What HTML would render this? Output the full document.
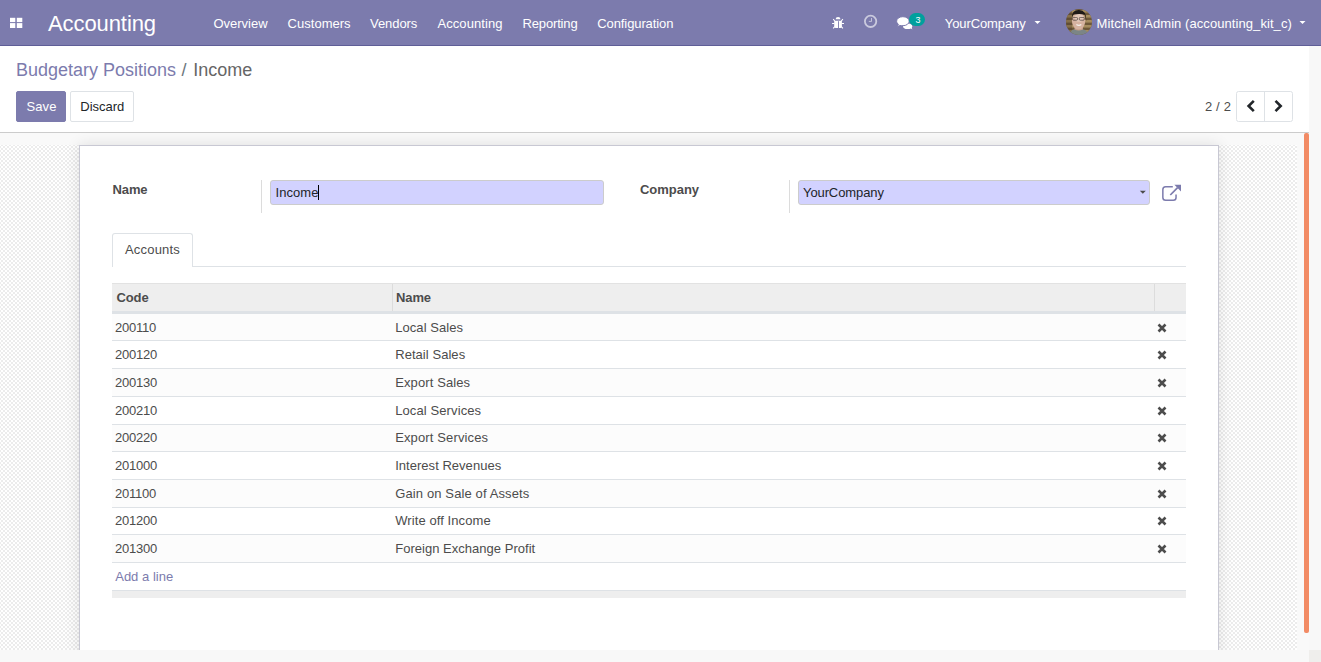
<!DOCTYPE html><html><head><meta charset="utf-8"><style>
*{box-sizing:border-box;margin:0;padding:0}
html,body{width:1321px;height:662px;overflow:hidden;background:#fff}
body{font-family:"Liberation Sans",sans-serif;font-size:13px;color:#4c4c4c;position:relative}
.a{position:absolute;white-space:nowrap;line-height:1}
#nav{position:absolute;left:0;top:0;width:1321px;height:46px;background:#7c7bad;border-bottom:1px solid #5f5e97}
#cp{position:absolute;left:0;top:46px;width:1309px;height:87px;background:#fff;border-bottom:1px solid #ccc}
.btn{position:absolute;height:31px;border-radius:2px}
#content{position:absolute;left:0;top:133px;width:1309px;height:517px;background:#f9f9f9;overflow:hidden}
#tex{position:absolute;left:0;top:12px;width:1297px;height:505px;background:conic-gradient(#ececec 25%,#fff 0 50%,#ececec 0 75%,#fff 0) 1px 1px/4px 4px}
#sheet{position:absolute;left:79px;top:145px;width:1140px;height:520px;background:#fff;border:1px solid #c8c8d3;box-shadow:0 0 14px rgba(0,0,0,.11)}
.inp{position:absolute;height:25px;background:#d2d2ff;border:1px solid #cccccc;border-radius:3px}
.sep{position:absolute;width:1px;background:#dcdcdc}
.hl{position:absolute;left:112px;width:1074px;height:1px;background:#dee2e6}
</style></head><body>
<div id="nav">
<svg class="a" style="left:0;top:0" width="30" height="46"><g fill="#fff"><rect x="10" y="17.8" width="5.3" height="4.3"/><rect x="16.8" y="17.8" width="5.5" height="4.3"/><rect x="10" y="23.1" width="5.3" height="4.9"/><rect x="16.8" y="23.1" width="5.5" height="4.9"/></g></svg>
<span class="a" style="left:48px;top:12.7px;letter-spacing:-0.085px;font-size:22px;color:#fff">Accounting</span>
<span class="a" style="left:213.5px;top:17px;letter-spacing:-0.022px;color:#fff">Overview</span>
<span class="a" style="left:287.6px;top:17px;letter-spacing:0.017px;color:#fff">Customers</span>
<span class="a" style="left:370px;top:17px;letter-spacing:-0.060px;color:#fff">Vendors</span>
<span class="a" style="left:437.5px;top:17px;letter-spacing:0.068px;color:#fff">Accounting</span>
<span class="a" style="left:522.5px;top:17px;letter-spacing:-0.152px;color:#fff">Reporting</span>
<span class="a" style="left:597.3px;top:17px;letter-spacing:-0.102px;color:#fff">Configuration</span>
<svg class="a" style="left:828px;top:12px" width="22" height="20" viewBox="0 0 22 20"><g fill="#fff"><path d="M7.6 7.3 Q7.7 5 10.05 5 Q12.4 5 12.5 7.3 Z"/><path d="M6.2 8.8 H13.9 V14.6 Q13.9 16 12.5 16 H7.6 Q6.2 16 6.2 14.6 Z"/></g><rect x="10" y="9.2" width="0.9" height="6.8" fill="#7c7bad"/><path d="M5.2 7.2 L6.8 9 M14.9 7.2 L13.3 9 M4.1 11.5 H6.4 M13.7 11.5 H16 M5.2 16.3 L6.8 14.6 M14.9 16.3 L13.3 14.6" stroke="#fff" stroke-width="1.1"/></svg>
<svg class="a" style="left:860px;top:10px" width="22" height="22" viewBox="0 0 22 22"><g fill="none" stroke="#fff" stroke-opacity=".6"><circle cx="10.6" cy="11.3" r="5.7" stroke-width="1.8"/><path d="M11.5 8 V11.4 H8.8" stroke-width="0.9"/></g></svg>
<svg class="a" style="left:893px;top:10px" width="35" height="22" viewBox="893 10 35 22"><g fill="#fff"><ellipse cx="907.6" cy="26.3" rx="4.6" ry="2.8"/><path d="M909.5 27.5 L912.4 29.4 L911.2 26.3 Z"/></g><g fill="#fff" stroke="#7c7bad" stroke-width="1"><path d="M896.6 21.2 A6.3 4.5 0 1 1 903 25.7 Q901 25.8 899.8 25.4 L897.4 27.3 L898.4 24.3 Q896.6 23.1 896.6 21.2 Z"/></g></svg>
<div class="a" style="left:909px;top:13px;width:16px;height:13.3px;border-radius:7px;background:#00a09d"></div>
<span class="a" style="left:915.5px;top:15.5px;letter-spacing:-0.005px;font-size:9px;color:#fff">3</span>
<span class="a" style="left:944.8px;top:17px;letter-spacing:-0.100px;color:#fff">YourCompany</span>
<svg class="a" style="left:1034px;top:20px" width="8" height="5"><path d="M0.5 1 H6.5 L3.5 4 Z" fill="#fff"/></svg>
<svg class="a" style="left:1066px;top:9px" width="26" height="26" viewBox="0 0 26 26"><defs><clipPath id="cc"><circle cx="13" cy="13" r="13"/></clipPath></defs><g clip-path="url(#cc)"><rect width="26" height="26" fill="#6e5838"/><g fill="#a58c5e"><rect x="0" y="1" width="26" height="2.6"/><rect x="0" y="6" width="26" height="2.6"/><rect x="0" y="11" width="26" height="2.6"/><rect x="0" y="16" width="26" height="2.6"/><rect x="0" y="21" width="26" height="2.6"/></g><rect x="0" y="0" width="6" height="26" fill="#4a3a28" opacity=".35"/><path d="M3 26 Q5 19.5 12.5 19.6 Q20 19.5 23.5 26 Z" fill="#7b8586"/><path d="M8.5 16 Q12.5 22 17 16 V20.5 Q12.5 22.5 8.5 20.5 Z" fill="#c49e88"/><ellipse cx="12.6" cy="11.8" rx="6.7" ry="8.6" fill="#d6b3a0"/><ellipse cx="13" cy="8.8" rx="4.5" ry="4" fill="#e2c8b9"/><path d="M6 9 Q5.5 0.8 13 1 Q20.8 0.9 20.3 12.5 Q19.6 8 18.6 5.6 Q13 4.2 7.5 5.6 Q6.5 7 6 9 Z" fill="#1f1a17"/><g fill="none" stroke="#3a302b" stroke-width="0.75" opacity=".85"><rect x="6.5" y="8.4" width="5" height="2.8" rx="1"/><rect x="13.3" y="8.4" width="5" height="2.8" rx="1"/></g><path d="M10.4 15.5 Q12.9 17.2 15.3 15.5" stroke="#f6f0ea" stroke-width="1.3" fill="none"/></g></svg>
<span class="a" style="left:1096.6px;top:17px;letter-spacing:0.072px;color:#fff">Mitchell Admin (accounting_kit_c)</span>
<svg class="a" style="left:1299px;top:20px" width="8" height="5"><path d="M0.5 1 H6.5 L3.5 4 Z" fill="#fff"/></svg>
</div>
<div id="cp"></div>
<span class="a" style="left:16.1px;top:61px;letter-spacing:-0.005px;font-size:18px;color:#7c7bad">Budgetary Positions</span>
<span class="a" style="left:181.5px;top:61px;letter-spacing:-0.001px;font-size:18px;color:#6c757d">/</span>
<span class="a" style="left:193.2px;top:61px;letter-spacing:-0.005px;font-size:18px;color:#666">Income</span>
<div class="btn" style="left:16px;top:91px;width:50px;background:#7c7bad;border:1px solid #7c7bad"></div>
<span class="a" style="left:26.5px;top:100px;letter-spacing:0.092px;color:#fff">Save</span>
<div class="btn" style="left:70px;top:91px;width:64px;background:#fff;border:1px solid #dee2e6"></div>
<span class="a" style="left:80.3px;top:100px;letter-spacing:-0.009px;color:#212529">Discard</span>
<span class="a" style="left:1205px;top:100px;letter-spacing:0.141px;color:#4c4c4c">2 / 2</span>
<div class="a" style="left:1236px;top:91px;width:57px;height:31px;border:1px solid #dee2e6;border-radius:2.5px"></div>
<div class="a" style="left:1264px;top:91px;width:1px;height:31px;background:#dee2e6"></div>
<svg class="a" style="left:1244px;top:99px" width="14" height="14" viewBox="0 0 14 14"><path d="M9.8 1.8 L4.6 7 L9.8 12.2" fill="none" stroke="#212529" stroke-width="2.6"/></svg>
<svg class="a" style="left:1271px;top:99px" width="14" height="14" viewBox="0 0 14 14"><path d="M4.5 1.8 L9.7 7 L4.5 12.2" fill="none" stroke="#212529" stroke-width="2.6"/></svg>
<div id="content"><div id="tex"></div><div style="position:absolute;left:1304px;top:0;width:5px;height:500px;background:#f28b65;border-radius:2px"></div></div>
<div id="sheet"></div>
<span class="a" style="left:112.5px;top:183px;letter-spacing:-0.102px;color:#4c4c4c;font-weight:bold">Name</span>
<div class="sep" style="left:261px;top:180px;height:33px"></div>
<div class="inp" style="left:270px;top:180px;width:334px"></div>
<span class="a" style="left:275.5px;top:186px;letter-spacing:0.062px;color:#212529">Income</span>
<div class="a" style="left:318px;top:185px;width:1px;height:15px;background:#000"></div>
<span class="a" style="left:640px;top:183px;letter-spacing:-0.033px;color:#4c4c4c;font-weight:bold">Company</span>
<div class="sep" style="left:789px;top:180px;height:33px"></div>
<div class="inp" style="left:798px;top:180px;width:352px"></div>
<span class="a" style="left:803px;top:186px;letter-spacing:-0.100px;color:#212529">YourCompany</span>
<svg class="a" style="left:1139px;top:190px" width="8" height="5"><path d="M0.8 0.8 H6.8 L3.8 3.8 Z" fill="#4c4c4c"/></svg>
<svg class="a" style="left:1160px;top:183px" width="24" height="20" viewBox="0 0 24 20"><g fill="none" stroke="#7c7bad" stroke-width="1.5"><path d="M12.8 3.85 H5.6 Q2.85 3.85 2.85 6.6 V14.4 Q2.85 17.15 5.6 17.15 H13.3 Q16.05 17.15 16.05 14.4 V11.4"/><path d="M10.3 12 L17.6 4.7" stroke-width="1.7"/></g><path d="M14.4 1.8 H21 V8.4 Z" fill="#7c7bad"/></svg>
<div class="a" style="left:112px;top:266px;width:1074px;height:1px;background:#dee2e6"></div>
<div class="a" style="left:112px;top:233px;width:81px;height:34px;background:#fff;border:1px solid #dee2e6;border-bottom:none;border-radius:3px 3px 0 0"></div>
<span class="a" style="left:125px;top:243px;letter-spacing:0.191px;color:#4c4c4c">Accounts</span>
<div class="a" style="left:112px;top:283px;width:1074px;height:31px;background:#eee;border-top:1px solid #e2e2e2;border-bottom:3px solid #dee2e6"></div>
<div class="a" style="left:392px;top:284px;width:1px;height:27px;background:#dcdcdc"></div>
<div class="a" style="left:1154px;top:284px;width:1px;height:27px;background:#dcdcdc"></div>
<span class="a" style="left:116.5px;top:291px;letter-spacing:-0.125px;color:#4c4c4c;font-weight:bold">Code</span>
<span class="a" style="left:396px;top:291px;letter-spacing:-0.102px;color:#4c4c4c;font-weight:bold">Name</span>
<div class="a" style="left:112px;top:314px;width:1074px;height:26px;background:#fcfcfc"></div>
<div class="hl" style="top:340px"></div>
<span class="a" style="left:115px;top:321px;letter-spacing:-0.230px">200110</span>
<span class="a" style="left:395.2px;top:321px;letter-spacing:0.072px">Local Sales</span>
<svg class="a" style="left:1155.6px;top:321.5px" width="12" height="12" viewBox="0 0 12 12"><path d="M2.5 2.5 L9.5 9.5 M9.5 2.5 L2.5 9.5" stroke="#4c4c4c" stroke-width="2.6"/></svg>
<div class="a" style="left:112px;top:341px;width:1074px;height:27px;background:#fff"></div>
<div class="hl" style="top:368px"></div>
<span class="a" style="left:115px;top:348px;letter-spacing:-0.230px">200120</span>
<span class="a" style="left:395.2px;top:348px;letter-spacing:0.053px">Retail Sales</span>
<svg class="a" style="left:1155.6px;top:348.5px" width="12" height="12" viewBox="0 0 12 12"><path d="M2.5 2.5 L9.5 9.5 M9.5 2.5 L2.5 9.5" stroke="#4c4c4c" stroke-width="2.6"/></svg>
<div class="a" style="left:112px;top:369px;width:1074px;height:27px;background:#fcfcfc"></div>
<div class="hl" style="top:396px"></div>
<span class="a" style="left:115px;top:376px;letter-spacing:-0.230px">200130</span>
<span class="a" style="left:395.2px;top:376px;letter-spacing:0.108px">Export Sales</span>
<svg class="a" style="left:1155.6px;top:376.5px" width="12" height="12" viewBox="0 0 12 12"><path d="M2.5 2.5 L9.5 9.5 M9.5 2.5 L2.5 9.5" stroke="#4c4c4c" stroke-width="2.6"/></svg>
<div class="a" style="left:112px;top:397px;width:1074px;height:27px;background:#fff"></div>
<div class="hl" style="top:424px"></div>
<span class="a" style="left:115px;top:404px;letter-spacing:-0.230px">200210</span>
<span class="a" style="left:395.2px;top:404px;letter-spacing:0.104px">Local Services</span>
<svg class="a" style="left:1155.6px;top:404.5px" width="12" height="12" viewBox="0 0 12 12"><path d="M2.5 2.5 L9.5 9.5 M9.5 2.5 L2.5 9.5" stroke="#4c4c4c" stroke-width="2.6"/></svg>
<div class="a" style="left:112px;top:425px;width:1074px;height:26px;background:#fcfcfc"></div>
<div class="hl" style="top:451px"></div>
<span class="a" style="left:115px;top:431px;letter-spacing:-0.230px">200220</span>
<span class="a" style="left:395.2px;top:431px;letter-spacing:0.131px">Export Services</span>
<svg class="a" style="left:1155.6px;top:431.5px" width="12" height="12" viewBox="0 0 12 12"><path d="M2.5 2.5 L9.5 9.5 M9.5 2.5 L2.5 9.5" stroke="#4c4c4c" stroke-width="2.6"/></svg>
<div class="a" style="left:112px;top:452px;width:1074px;height:27px;background:#fff"></div>
<div class="hl" style="top:479px"></div>
<span class="a" style="left:115px;top:459px;letter-spacing:-0.230px">201000</span>
<span class="a" style="left:395.2px;top:459px;letter-spacing:0.029px">Interest Revenues</span>
<svg class="a" style="left:1155.6px;top:459.5px" width="12" height="12" viewBox="0 0 12 12"><path d="M2.5 2.5 L9.5 9.5 M9.5 2.5 L2.5 9.5" stroke="#4c4c4c" stroke-width="2.6"/></svg>
<div class="a" style="left:112px;top:480px;width:1074px;height:27px;background:#fcfcfc"></div>
<div class="hl" style="top:507px"></div>
<span class="a" style="left:115px;top:487px;letter-spacing:-0.230px">201100</span>
<span class="a" style="left:395.2px;top:487px;letter-spacing:0.125px">Gain on Sale of Assets</span>
<svg class="a" style="left:1155.6px;top:487.5px" width="12" height="12" viewBox="0 0 12 12"><path d="M2.5 2.5 L9.5 9.5 M9.5 2.5 L2.5 9.5" stroke="#4c4c4c" stroke-width="2.6"/></svg>
<div class="a" style="left:112px;top:508px;width:1074px;height:26px;background:#fff"></div>
<div class="hl" style="top:534px"></div>
<span class="a" style="left:115px;top:514px;letter-spacing:-0.230px">201200</span>
<span class="a" style="left:395.2px;top:514px;letter-spacing:0.085px">Write off Income</span>
<svg class="a" style="left:1155.6px;top:514.5px" width="12" height="12" viewBox="0 0 12 12"><path d="M2.5 2.5 L9.5 9.5 M9.5 2.5 L2.5 9.5" stroke="#4c4c4c" stroke-width="2.6"/></svg>
<div class="a" style="left:112px;top:535px;width:1074px;height:27px;background:#fcfcfc"></div>
<div class="hl" style="top:562px"></div>
<span class="a" style="left:115px;top:542px;letter-spacing:-0.230px">201300</span>
<span class="a" style="left:395.2px;top:542px;letter-spacing:0.023px">Foreign Exchange Profit</span>
<svg class="a" style="left:1155.6px;top:542.5px" width="12" height="12" viewBox="0 0 12 12"><path d="M2.5 2.5 L9.5 9.5 M9.5 2.5 L2.5 9.5" stroke="#4c4c4c" stroke-width="2.6"/></svg>
<span class="a" style="left:115.2px;top:570px;letter-spacing:0.018px;color:#7c7bad">Add a line</span>
<div class="a" style="left:112px;top:590px;width:1074px;height:8px;background:#eee;border-top:1px solid #dee2e6"></div>
<div class="a" style="left:1309px;top:46px;width:12px;height:604px;background:#f8f8f8"></div>
<div class="a" style="left:0;top:650px;width:1309px;height:12px;background:#f8f8f8"></div>
<div class="a" style="left:1309px;top:650px;width:12px;height:12px;background:#efeeec"></div>
</body></html>
